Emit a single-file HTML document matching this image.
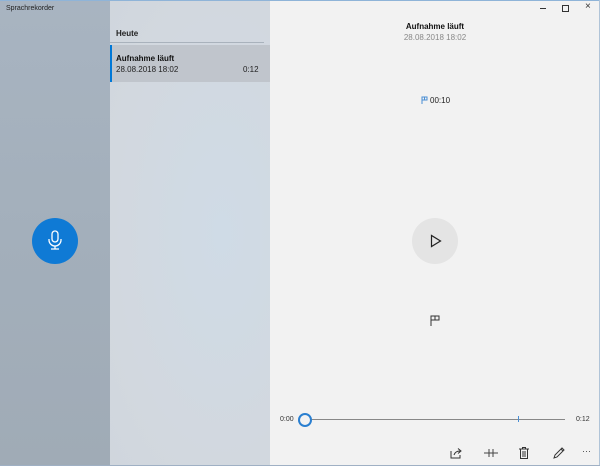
<!DOCTYPE html><html><head><style>
body{margin:0;width:600px;height:466px;overflow:hidden;font-family:"Liberation Sans",sans-serif;position:relative;background:#f2f2f2}
.abs{position:absolute}
</style></head><body>
<div class="abs" style="left:0;top:0;width:110px;height:466px;background:linear-gradient(180deg,#a8b4c1,#a3afbb 50%,#a0abb6)"></div>
<div class="abs" style="left:110px;top:0;width:160px;height:466px;background:radial-gradient(ellipse at 70% 50%,#cfdbe6,#d2d8df 70%,#d0d6dd)"></div>
<div class="abs" style="left:0;top:0;width:600px;height:1px;background:#8fb4d8"></div>
<div class="abs" style="left:599px;top:0;width:1px;height:466px;background:#b0c4d8"></div>
<div class="abs" style="left:0;top:465px;width:600px;height:1px;background:#9fb0c4"></div>
<div class="abs" style="left:6px;top:5px;font-size:7px;color:#222">Sprachrekorder</div>
<div class="abs" style="left:116px;top:29px;font-size:8px;font-weight:bold;color:#222">Heute</div>
<div class="abs" style="left:110px;top:42px;width:154px;height:1px;background:#a9b2bc"></div>
<div class="abs" style="left:110px;top:45px;width:160px;height:37px;background:#c0c5cc"></div>
<div class="abs" style="left:110px;top:45px;width:2px;height:37px;background:#0078d7"></div>
<div class="abs" style="left:116px;top:54px;font-size:8px;font-weight:bold;color:#111">Aufnahme läuft</div>
<div class="abs" style="left:116px;top:65px;font-size:8px;color:#222">28.08.2018 18:02</div>
<div class="abs" style="left:243px;top:65px;font-size:8px;color:#222">0:12</div>
<div class="abs" style="left:32px;top:218px;width:46px;height:46px;border-radius:50%;background:#0f7ad5"></div>
<svg class="abs" style="left:46px;top:230px" width="18" height="22" viewBox="0 0 18 22" fill="none" stroke="#fff" stroke-width="1.3"><rect x="6" y="1" width="6" height="11" rx="3"/><path d="M3 9v1a6 6 0 0 0 12 0V9M9 16v3M5 19h8"/></svg>
<div class="abs" style="left:270px;top:22px;width:330px;text-align:center;font-size:8px;font-weight:bold;color:#111">Aufnahme läuft</div>
<div class="abs" style="left:270px;top:33px;width:330px;text-align:center;font-size:8px;color:#888">28.08.2018 18:02</div>
<div class="abs" style="left:540px;top:8px;width:6px;height:1px;background:#333"></div>
<div class="abs" style="left:562px;top:5px;width:5px;height:5px;border:1px solid #333"></div>
<div class="abs" style="left:585px;top:1px;font-size:10px;color:#333">×</div>
<svg class="abs" style="left:421px;top:96px" width="8" height="8" viewBox="0 0 8 8" fill="none" stroke="#4a8fd4"><path d="M1 8V1h5v3H1"/><path d="M3.5 1v3"/></svg>
<div class="abs" style="left:430px;top:96px;font-size:8px;color:#222">00:10</div>
<div class="abs" style="left:412px;top:218px;width:46px;height:46px;border-radius:50%;background:#e4e4e4"></div>
<svg class="abs" style="left:430px;top:234px" width="12" height="14" viewBox="0 0 12 14" fill="none" stroke="#222" stroke-width="1.2"><path d="M1.5 1.5v11l9-5.5z"/></svg>
<svg class="abs" style="left:430px;top:315px" width="10" height="11" viewBox="0 0 10 11" fill="none" stroke="#333"><path d="M1 11V1h8v4H1M5 1v4"/></svg>
<div class="abs" style="left:280px;top:416px;font-size:7px;color:#333">0:00</div>
<div class="abs" style="left:308px;top:419px;width:257px;height:1px;background:#888"></div>
<div class="abs" style="left:518px;top:416px;width:1px;height:6px;background:#4a8fd4"></div>
<div class="abs" style="left:298px;top:413px;width:10px;height:10px;border-radius:50%;border:2px solid #2a7fd0;background:#f2f2f2"></div>
<div class="abs" style="left:576px;top:416px;font-size:7px;color:#333">0:12</div>
<svg class="abs" style="left:450px;top:447px" width="13" height="12" viewBox="0 0 13 12" fill="none" stroke="#333"><path d="M1 4v7h9V8M4 8c1-3 3-4 6-4M8 1.5l3 2.5-3 2.5"/></svg>
<svg class="abs" style="left:484px;top:447px" width="14" height="12" viewBox="0 0 14 12" fill="none" stroke="#444"><path d="M0 6h14M5 2v8M9 2v8"/></svg>
<svg class="abs" style="left:519px;top:447px" width="10" height="12" viewBox="0 0 10 12" fill="none" stroke="#333"><path d="M0 2h10M3.5 2V.5h3V2M1.5 2v9.5h7V2M4 4v6M6 4v6"/></svg>
<svg class="abs" style="left:553px;top:447px" width="12" height="12" viewBox="0 0 12 12" fill="none" stroke="#333"><path d="M1 11l1-3 7-7 2 2-7 7zM8 2l2 2"/></svg>
<div class="abs" style="left:582px;top:446px;font-size:9px;color:#444">···</div>
</body></html>
